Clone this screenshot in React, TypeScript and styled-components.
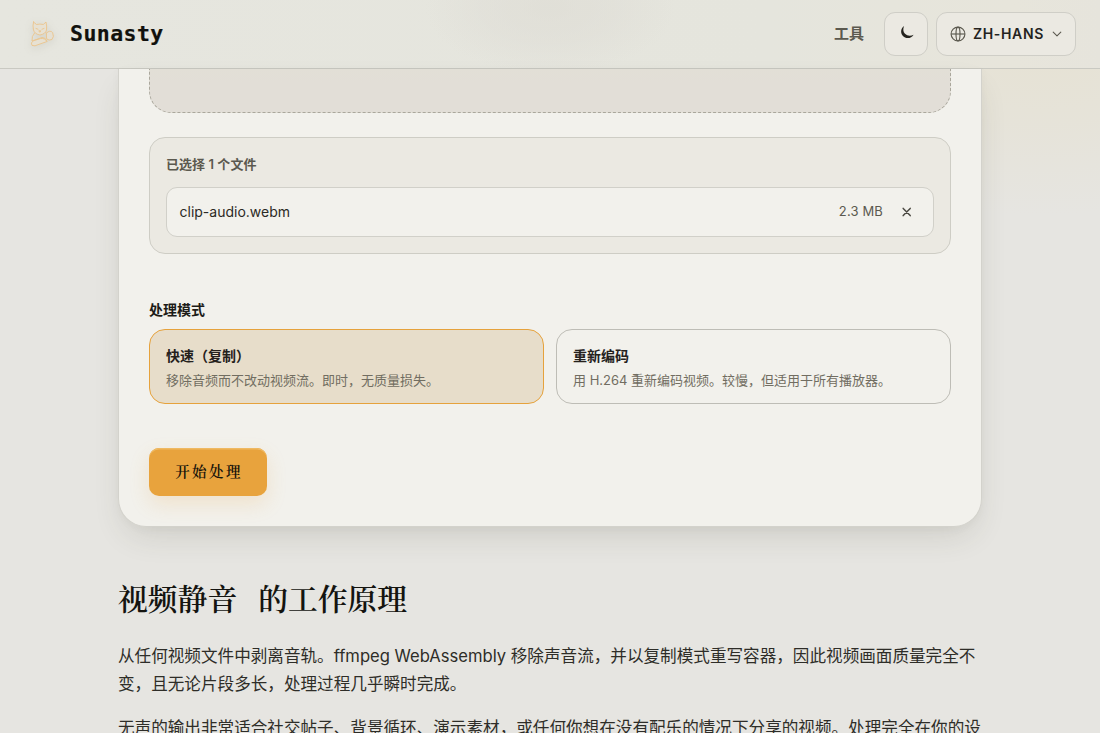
import React from "react";
import styled, { createGlobalStyle } from "styled-components";

const sans = `Inter, "Noto Sans CJK SC", sans-serif`;
const serif = `"Noto Serif CJK SC", "Noto Serif SC", "Source Han Serif SC", "Noto Sans CJK SC", serif`;

const Global = createGlobalStyle`
  * { box-sizing: border-box; }
  body { margin: 0; background: #e6e5e1; font-family: ${sans}; color: #151511; }
  button { font: inherit; color: inherit; }
  h2, p { margin: 0; }
`;

const Page = styled.div`
  height: 733px;
  overflow: hidden;
  display: flex;
  flex-direction: column;
  background:
    radial-gradient(ellipse 300px 175px at 1040px 40px, rgba(230, 225, 208, 0.8), rgba(230, 226, 212, 0.6) 50%, rgba(230, 228, 220, 0) 100%),
    #e6e5e1;
`;

const Header = styled.header`
  flex: none;
  height: 69px;
  padding: 0 24px 1px 24px;
  display: flex;
  align-items: center;
  border-bottom: 1px solid #c9c9c2;
  background:
    radial-gradient(ellipse 125px 66px at 550px 8px, rgba(221, 219, 211, 0.6), rgba(222, 220, 213, 0.45) 50%, rgba(227, 227, 220, 0) 100%),
    linear-gradient(90deg, #e6e6df, #e5e5dd 70%, #e7e5db 92%, #e6e4dc);
`;

const Brand = styled.div`
  display: flex;
  align-items: center;
  gap: 12px;
  flex: 1;
`;

const Logo = styled.svg`
  width: 34px;
  height: 34px;
  filter: drop-shadow(0 2px 4px rgba(80, 70, 50, 0.12));
`;

const BrandName = styled.span`
  font: 700 21.5px/28px "DejaVu Sans Mono", monospace;
  letter-spacing: 0.45px;
  color: #11110d;
  -webkit-text-stroke: 0.2px #11110d;
`;

const Nav = styled.nav`
  display: flex;
  align-items: center;
`;

const NavLink = styled.span`
  font-size: 15px;
  line-height: 20px;
  font-weight: 700;
  color: #5b594f;
  margin-right: 20px;
`;

const HeaderButton = styled.button<{ $width: number }>`
  width: ${(p) => p.$width}px;
  height: 44px;
  padding: 0;
  display: flex;
  align-items: center;
  justify-content: center;
  border: 1px solid #cfcec7;
  border-radius: 11px;
  background: #ebe9e2;
  font-size: 14px;
  font-weight: 600;
  letter-spacing: 0.65px;
  color: #24231e;
  & + & { margin-left: 8px; }
`;

const MoonIcon = styled.svg`
  width: 18px;
  height: 18px;
  margin: 0 0 2px 2px;
`;

const LangText = styled.span`
  margin: 0 8px 0 7px;
`;

const Main = styled.main`
  width: 864px;
  margin: 0 auto;
  flex: none;
`;

const Card = styled.section`
  height: 458px;
  padding: 0 30px;
  border: 1px solid #d3d2cc;
  border-top: 0;
  border-radius: 0 0 28px 28px;
  background: #f2f1ec;
  box-shadow: 0 14px 32px -8px rgba(60, 60, 45, 0.16), 0 2px 10px rgba(60, 60, 45, 0.03);
`;

const DropZone = styled.div`
  height: 44px;
  border: 1px dashed #aaa79c;
  border-top: 0;
  border-radius: 0 0 22px 22px;
  background: linear-gradient(#e2dfd6, #e2ded7 30%);
`;

const FilePanel = styled.div`
  height: 117px;
  margin-top: 24px;
  padding: 16px;
  border: 1px solid #cecdc5;
  border-radius: 16px;
  background: #ebe9e2;
`;

const FileCount = styled.div`
  height: 20px;
  margin-bottom: 13px;
  font-size: 13px;
  line-height: 20px;
  letter-spacing: 0.05px;
  font-weight: 600;
  color: #5b594f;
`;

const FileRow = styled.div`
  height: 50px;
  padding: 0 19px 1px 12.5px;
  display: flex;
  align-items: center;
  border: 1px solid #d1d0c9;
  border-radius: 11px;
  background: #f2f1ec;
`;

const FileName = styled.span`
  flex: 1;
  font-size: 14px;
  color: #2b2a25;
`;

const FileSize = styled.span`
  font-size: 13px;
  letter-spacing: 0.15px;
  color: #5b594f;
  margin: 0 17px 1px 0;
`;

const Label = styled.div`
  height: 20px;
  margin: 46px 0 9px;
  font-size: 14px;
  line-height: 20px;
  font-weight: 700;
  color: #1d1c18;
`;

const Modes = styled.div`
  display: grid;
  grid-template-columns: 1fr 1fr;
  gap: 12px;
`;

const Mode = styled.div<{ $active?: boolean }>`
  height: 75px;
  padding: 15px 16px;
  border: 1px solid ${(p) => (p.$active ? "#e6a23c" : "#bebdb6")};
  border-radius: 16px;
  background: ${(p) => (p.$active ? "#e7ddca" : "transparent")};
`;

const ModeName = styled.div`
  font-size: 14px;
  line-height: 22px;
  font-weight: 700;
  color: #25211c;
`;

const ModeText = styled.div`
  margin-top: 3px;
  font-size: 13px;
  line-height: 20px;
  color: #716d61;
`;

const Start = styled.button`
  display: block;
  width: 118px;
  height: 48px;
  margin-top: 44px;
  padding: 0 0 3px 2px;
  border: 0;
  border-radius: 10px;
  background: #e8a33d;
  box-shadow: inset 0 1.5px 0 #efb962, 0 8px 20px rgba(232, 163, 61, 0.18);
  font-family: ${serif};
  font-size: 14.5px;
  font-weight: 600;
  letter-spacing: 2.4px;
  color: #17130b;
`;

const Title = styled.h2`
  display: flex;
  gap: 21px;
  margin-top: 49px;
  font-family: ${serif};
  font-size: 29.8px;
  line-height: 44px;
  font-weight: 600;
  color: #141410;
`;

const Paragraph = styled.p`
  margin-top: 22px;
  font-size: 16.6px;
  line-height: 28px;
  color: #2e2d28;
  white-space: nowrap;
  & + & { margin-top: 16px; }
`;

export default function App() {
  return (
    <Page>
      <Global />
      <Header>
        <Brand>
          <Logo viewBox="0 0 34 34" fill="none" stroke="#ebc48b" strokeWidth="0.9" strokeLinejoin="round" strokeLinecap="round">
            <path d="M9.5 5 L12.5 7.5 Q16 6.6 19.3 7.5 L22 5 Q23 9 22.5 13 Q21.5 17 16 18 Q10.5 17 9.5 13 Q8.5 9 9.5 5Z" fill="#e7e1d3" />
            <path d="M12 11.5 L14 12.2 M18 12.2 L20 11.5 M15.2 13.8 H16.8 L16 15Z" />
            <path d="M10.5 16 Q7.5 19 8 24 L18 20.5 Q21 20 23 24 M22 15.5 Q24 19 24 22" />
            <path d="M22.6 16 Q26 12.5 28.6 15.6 Q30.5 19.5 28 22.5 Q25 24 22.8 22Z" fill="#e5e0d4" />
            <path d="M9 24 Q6 26 8 28.4 Q11 29.6 14 27.7 L23 24.5 Q21 21 17 21.5Z" fill="#e7e1d3" />
          </Logo>
          <BrandName>Sunasty</BrandName>
        </Brand>
        <Nav>
          <NavLink>工具</NavLink>
          <HeaderButton $width={44} aria-label="深色模式">
            <MoonIcon viewBox="0 0 18 18">
              <path d="M6.1 1.9C2.8 4 2.2 8.7 4.7 11.7 7.6 15.1 13.2 14.9 15.6 10.7 12.6 12.4 9.2 12 7 9.8 5 7.8 4.9 4.5 6.1 1.9Z" fill="#24231e" />
            </MoonIcon>
          </HeaderButton>
          <HeaderButton $width={140}>
            <svg width="16" height="16" viewBox="0 0 16 16" fill="none" stroke="#5b594f" strokeWidth="1.15">
              <circle cx="8" cy="8" r="6.9" />
              <ellipse cx="8" cy="8" rx="2" ry="6.9" />
              <path d="M1.2 8H14.8" />
            </svg>
            <LangText>ZH-HANS</LangText>
            <svg width="10" height="10" viewBox="0 0 10 10" fill="none" stroke="#5b594f" strokeWidth="1.1" strokeLinecap="round" strokeLinejoin="round">
              <path d="M1.2 3.2L5 6.8L8.8 3.2" />
            </svg>
          </HeaderButton>
        </Nav>
      </Header>
      <Main>
        <Card>
          <DropZone />
          <FilePanel>
            <FileCount>已选择 1 个文件</FileCount>
            <FileRow>
              <FileName>clip-audio.webm</FileName>
              <FileSize>2.3 MB</FileSize>
              <svg width="14" height="14" viewBox="0 0 14 14" stroke="#4b4942" strokeWidth="1.5" strokeLinecap="round">
                <path d="M3.2 3.4L10.2 10.6M10.2 3.4L3.2 10.6" />
              </svg>
            </FileRow>
          </FilePanel>
          <Label>处理模式</Label>
          <Modes>
            <Mode $active>
              <ModeName>快速（复制）</ModeName>
              <ModeText>移除音频而不改动视频流。即时，无质量损失。</ModeText>
            </Mode>
            <Mode>
              <ModeName>重新编码</ModeName>
              <ModeText>用 H.264 重新编码视频。较慢，但适用于所有播放器。</ModeText>
            </Mode>
          </Modes>
          <Start>开始处理</Start>
        </Card>
        <Title>
          <span>视频静音</span>
          <span>的工作原理</span>
        </Title>
        <Paragraph>
          从任何视频文件中剥离音轨。ffmpeg WebAssembly 移除声音流，并以复制模式重写容器，因此视频画面质量完全不
          <br />
          变，且无论片段多长，处理过程几乎瞬时完成。
        </Paragraph>
        <Paragraph>无声的输出非常适合社交帖子、背景循环、演示素材，或任何你想在没有配乐的情况下分享的视频。处理完全在你的设</Paragraph>
      </Main>
    </Page>
  );
}
